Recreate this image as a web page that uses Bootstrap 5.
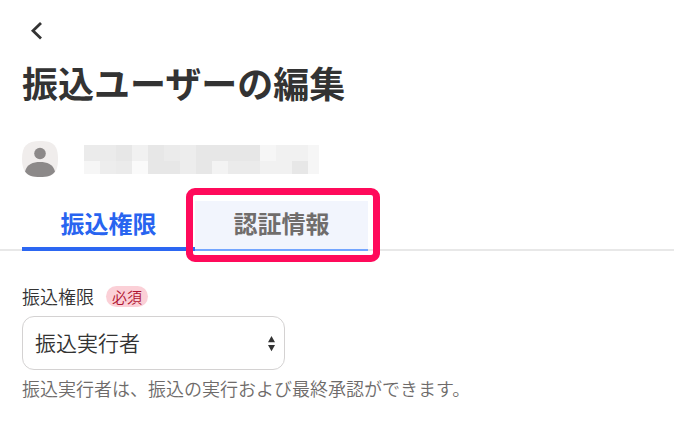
<!DOCTYPE html>
<html lang="ja">
<head>
<meta charset="utf-8">
<meta name="viewport" content="width=device-width, initial-scale=1">
<title>振込ユーザーの編集</title>
<link href="https://cdn.jsdelivr.net/npm/bootstrap@5.3.0/dist/css/bootstrap.min.css" rel="stylesheet">
<style>
body { font-family: "Noto Sans CJK JP", sans-serif; color: #333; background: #fff; }
.page-main { padding: 16px 8px 0 0; }
.page-section { padding-left: 22px; }
.back-link { width: 28px; height: 28px; color: #333; }
.page-title { font-size: 36px; line-height: 52px; font-weight: 700; margin-top: 12px; }
.user-row { gap: 26px; margin-top: 33px; }
.edit-tabs { border-bottom: 2px solid #e8e8e8; padding-left: 22px; margin-top: 24px; }
.edit-tabs .nav-item { width: 173px; }
.edit-tabs .nav-link { width: 100%; height: 50px; margin-bottom: -2px; padding: 0 0 4px; border: 0; border-radius: 0; background: transparent; font-size: 24px; line-height: 42px; font-weight: 700; color: #706d6c; }
.edit-tabs .nav-link.active { color: #2864f0; padding-bottom: 2px; border-bottom: 4px solid #2c67f2; }
.edit-tabs .nav-link.hovered { background: #f2f5fd; border-bottom: 2px solid #73a5ff; }
.callout-frame { inset: -13px -12px -13px -9px; border: 7px solid #ff0a5b; border-radius: 9px; pointer-events: none; }
.field-block { padding-top: 32px; }
.field-head { gap: 12px; }
.field-label { font-size: 18px; line-height: 26px; font-weight: 350; }
.required-tag { background: #fbd0d7; color: #b01431; font-size: 15px; line-height: 21px; font-weight: 350; padding: 0 6px; }
.select-wrap { width: 263px; max-width: 100%; margin-top: 7px; }
.role-select { appearance: none; width: 100%; height: 54px; padding: 0 32px 0 12px; border: 1px solid #d4d2d2; border-radius: 12px; background: #fff; color: #333; font-size: 21px; font-weight: 350; }
.select-arrows { right: 10px; top: 20px; pointer-events: none; }
.help-text { font-size: 18px; line-height: 26px; font-weight: 350; color: #6e6b6a; margin-top: 5px; }
</style>
</head>
<body>
<main class="page-main">
  <header class="page-section">
    <a href="#" class="back-link d-block" aria-label="戻る">
      <svg class="d-block" width="28" height="28" viewBox="0 0 28 28" fill="none" stroke="currentColor" stroke-width="2.8" aria-hidden="true"><path d="M19 7l-8 7.700 8 7.700"/></svg>
    </a>
    <h1 class="page-title mb-0">振込ユーザーの編集</h1>
    <div class="user-row d-flex align-items-center">
      <svg width="36" height="36" viewBox="0 0 36 36" role="img" aria-label="ユーザー">
        <path fill="#f0edec" d="M18 0C31 0 36 4 36 18S31 36 18 36 0 31 0 18 5 0 18 0Z"/>
        <circle cx="18" cy="12.500" r="5.800" fill="#8c8989"/>
        <path fill="#8c8989" d="M3 30.500C5 23 11 21 18 21s13 2 15 9.500C30 35 25 36 18 36S6 35 3 30.500Z"/>
      </svg>
      <svg width="235" height="29" viewBox="0 0 235 29" shape-rendering="crispEdges" aria-hidden="true">
        <path fill="#ebebeb" d="M0 0h235v29H0z"/>
        <path fill="#e7e7e7" d="M32 0h16v16H32zM64 0h16v29H64zM112 0h64v16h-64zM80 16h16v13H80zM112 16h16v13h-16zM208 16h16v13h-16z"/>
        <path fill="#ededed" d="M96 0h16v29H96zM16 16h16v13H16z"/>
        <path fill="#f1f1f1" d="M48 0h16v16H48zM192 0h32v16h-32zM176 16h16v13h-16zM192 16h16v13h-16z"/>
        <path fill="#f6f6f6" d="M176 0h16v16h-16zM224 0h11v29h-11zM0 16h16v13H0z"/>
        <path fill="#fafafa" d="M48 16h16v13H48z"/>
        <path fill="#f3f3f3" d="M128 16h16v13h-16z"/>
      </svg>
    </div>
  </header>

  <ul class="nav edit-tabs" role="tablist">
    <li class="nav-item" role="presentation">
      <button type="button" class="nav-link active" role="tab" aria-selected="true">振込権限</button>
    </li>
    <li class="nav-item position-relative" role="presentation">
      <button type="button" class="nav-link hovered" role="tab" aria-selected="false">認証情報</button>
      <span class="callout-frame position-absolute"></span>
    </li>
  </ul>

  <form class="page-section field-block">
    <div class="field-head d-flex align-items-center">
      <label class="field-label" for="role">振込権限</label>
      <span class="required-tag rounded-pill">必須</span>
    </div>
    <div class="select-wrap position-relative">
      <select id="role" class="role-select d-block" aria-describedby="role-help">
        <option selected>振込実行者</option>
      </select>
      <svg class="select-arrows position-absolute" width="7" height="16" viewBox="0 0 7 16" fill="#333" aria-hidden="true"><path d="M3.500 0L7 6.300H0zM0 9h7l-3.500 6.300z"/></svg>
    </div>
    <p class="help-text mb-0" id="role-help">振込実行者は、振込の実行および最終承認ができます。</p>
  </form>
</main>
<script src="https://cdn.jsdelivr.net/npm/bootstrap@5.3.0/dist/js/bootstrap.bundle.min.js"></script>
</body>
</html>
